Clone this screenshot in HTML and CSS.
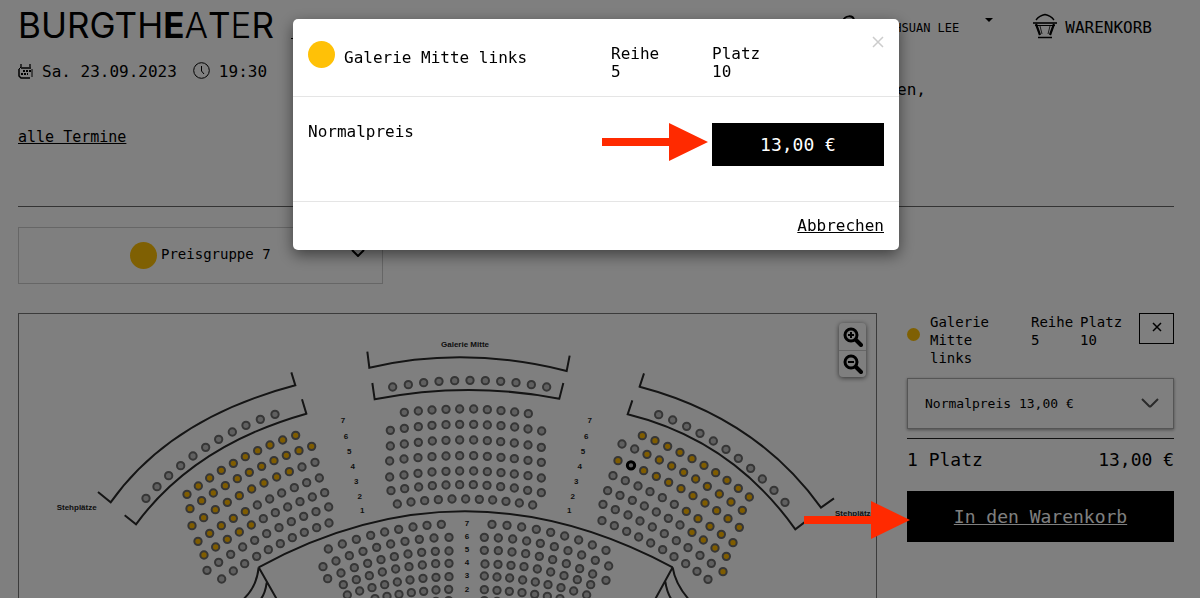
FILE: index.html
```html
<!DOCTYPE html>
<html lang="de">
  <head>
    <meta charset="UTF-8" />
    <meta name="viewport" content="width=device-width, initial-scale=1.0" />
    <title>Burgtheater - Platzwahl</title>
    <link rel="stylesheet" href="styles.css">
  </head>
  <body>
    <div class="page">
      <header class="site-header">
        <a href="#" class="logo">BURGTH<span class="logo-heavy">E</span><span class="logo-light">A</span>T<span class="logo-light">E</span>R</a>
        <div class="search-line"></div>
        <nav class="user-nav">
          <a href="#" class="user-link">
            <svg class="user-icon" viewBox="0 0 16 26" fill="none" stroke="#000" stroke-width="2">
              <path d="M2 6C4 0 12 0 13 5C15 11 8 16 4 12" />
              <path d="M1 25c0-12 14-12 14 0" />
            </svg>
            HSUAN LEE
            <span class="caret"></span>
          </a>
          <a href="#" class="cart-link">
            <svg class="cart-icon" viewBox="0 0 24 26" fill="none" stroke="#000">
              <path d="M3 7C6 3 9 2 12 1.500C15 2 18 3 21 7" stroke-width="1.300" />
              <path d="M0 10h24" stroke-width="1.600" />
              <path d="M2 12.500h20" stroke-width="1" />
              <path d="M3 11l4 11M21 11l-4 11" stroke-width="2.200" />
              <path d="M7 13l2 8M17 13l-2 8" stroke-width="0.800" />
              <path d="M5 24.500h14" stroke-width="1.500" />
            </svg>
            WARENKORB
          </a>
        </nav>
      </header>

      <section class="event">
        <div class="event-info">
          <p class="event-date">
            <svg class="calendar-icon" viewBox="0 0 15 15" fill="none" stroke="#000">
              <path d="M1 5v7l2 2h9M3 4h10" stroke-width="1.500" />
              <path d="M14 5v8M1 5l2-2" stroke-width="1" />
              <path d="M3 0v3M12 0v3" stroke-width="1.300" />
              <path d="M5 7h8M3 10h7" stroke-width="1.800" stroke-dasharray="2 1" />
            </svg>
            <span>Sa. 23.09.2023</span>
            <svg class="clock-icon" viewBox="0 0 17 17" fill="none" stroke="#000">
              <circle cx="8.500" cy="8.500" r="7.800" />
              <path d="M8.500 4v5l2.500 3" />
            </svg>
            <span>19:30</span>
          </p>
          <a href="#" class="all-dates">alle Termine</a>
        </div>
        <p class="event-note">en,</p>
      </section>

      <div class="price-filter">
        <span class="price-dot"></span>
        <select class="price-select" aria-label="Preisgruppe">
          <option>Preisgruppe 7</option>
        </select>
        <svg class="filter-chevron" viewBox="0 0 14 8" fill="none" stroke="#000" stroke-width="2">
          <path d="M1 1l6 6 6-6" />
        </svg>
      </div>

      <main class="booking">
        <div class="seat-map">
          <svg class="plan" viewBox="57 942 2571 855">
            <g id="blockLeft" transform="translate(0 1080)">
              <path class="wall" d="M294 396L332 427Q511 174 886 76L874 37" />
              <path class="wall" d="M374 466L408 493Q582 256 919 161L906 118" />
              <path class="wall" d="M776 622Q770 680 732 716M776 622L834 724M800 668Q796 700 782 718" />
              <text class="plan-label" x="230" y="451">Stehplätze</text>
            </g>
            <g id="blockCenter" transform="translate(960 990)">
              <path class="wall" d="M142 65L148 113Q436 46 740 123L749 77" />
              <path class="wall" d="M157 159L164 208Q441 153 718 206L730 159" />
              <path class="wall" d="M-184 712Q433 376 1058 712" />
              <text class="plan-label" x="435" y="52">Galerie Mitte</text>
            </g>
            <g id="blockRight" transform="translate(1680 1080)">
              <path class="wall" d="M252 40L239 80Q589 172 783 443L822 415" />
              <path class="wall" d="M217 121L203 163Q516 240 706 508L745 478" />
              <path class="wall" d="M338 622L282 724M338 622Q345 670 386 718M316 665Q320 695 334 718" />
              <text class="plan-label" x="885" y="467">Stehplätze</text>
            </g>
          </svg>
          <div class="zoom-controls">
            <button type="button" class="zoom-button" aria-label="Vergrößern">
              <svg viewBox="0 0 20 20" fill="none" stroke="#000">
                <circle cx="8" cy="8" r="6" stroke-width="3" />
                <path d="M13 13l5 5" stroke-width="4" stroke-linecap="round" />
                <path d="M5 8h6M8 5v6" stroke-width="2" />
              </svg>
            </button>
            <button type="button" class="zoom-button" aria-label="Verkleinern">
              <svg viewBox="0 0 20 20" fill="none" stroke="#000">
                <circle cx="8" cy="8" r="6" stroke-width="3" />
                <path d="M13 13l5 5" stroke-width="4" stroke-linecap="round" />
                <path d="M5 8h6" stroke-width="2" />
              </svg>
            </button>
          </div>
        </div>

        <aside class="cart">
          <div class="cart-item">
            <span class="seat-dot"></span>
            <div class="seat-name">Galerie Mitte links</div>
            <div>Reihe<br />5</div>
            <div>Platz<br />10</div>
            <button type="button" class="remove-button" aria-label="Entfernen">
              <svg viewBox="0 0 10 10" stroke="#000" stroke-width="1.500">
                <path d="M1 1l8 8M9 1l-8 8" />
              </svg>
            </button>
          </div>
          <div class="fare">
            <select class="fare-select" aria-label="Preis">
              <option>Normalpreis 13,00 €</option>
            </select>
            <svg class="fare-chevron" viewBox="0 0 18 10" fill="none" stroke="#555" stroke-width="2">
              <path d="M1 1l7 7q1 1 2 0l7-7" />
            </svg>
          </div>
          <div class="cart-total">
            <span>1 Platz</span>
            <span>13,00 €</span>
          </div>
          <div class="cart-action">
            <button type="button" class="cart-button">In den Warenkorb</button>
            <svg class="arrow arrow-cart" viewBox="0 0 106 38" fill="#ff2a00">
              <path d="M0 15h67V0l39 19-39 19V23H0z" />
            </svg>
          </div>
        </aside>
      </main>
    </div>

    <div class="backdrop">
      <div class="modal" role="dialog" aria-label="Preis wählen">
        <div class="modal-header">
          <div class="modal-seat">
            <span class="price-dot"></span>
            <span class="modal-seat-name">Galerie Mitte links</span>
          </div>
          <div>Reihe<br />5</div>
          <div>Platz<br />10</div>
          <button type="button" class="close-button" aria-label="Schließen">
            <svg viewBox="0 0 12 12" stroke="#ccc" stroke-width="1.500">
              <path d="M1 1l10 10M11 1l-10 10" />
            </svg>
          </button>
        </div>
        <div class="modal-body">
          <span class="fare-name">Normalpreis</span>
          <div class="fare-action">
            <button type="button" class="fare-button">13,00 €</button>
            <svg class="arrow arrow-fare" viewBox="0 0 106 38" fill="#ff2a00">
              <path d="M0 15h67V0l39 19-39 19V23H0z" />
            </svg>
          </div>
        </div>
        <div class="modal-footer">
          <a href="#">Abbrechen</a>
        </div>
      </div>
    </div>

    <script>
      // Each row: first, middle and last seat (x, y), then one letter per seat
      // y = available, g = taken, s = selected
      const rows = {
        blockLeft: [
          [438, 415, 617, 262, 825, 163, "ggggggggggg"],
          [561, 403, 718, 300, 887, 226, "yyyyyyyyyy"],
          [570, 446, 748, 337, 935, 259, "yyyyyyyyyyy"],
          [576, 497, 755, 387, 945, 307, "yyyyyyyyygg"],
          [594, 544, 772, 435, 958, 354, "yyyyygggggg"],
          [612, 585, 790, 476, 974, 398, "yyyyygggggg"],
          [621, 631, 800, 521, 986, 441, "ggggggggggg"],
          [665, 657, 823, 560, 987, 489, "gggggggggg"],
        ],
        blockCenter: [
          [218, 171, 450, 151, 680, 171, "ggggggggggg"],
          [253, 247, 440, 237, 625, 251, "gggggggggg"],
          [211, 301, 440, 283, 665, 303, "gggggggggggg"],
          [211, 348, 440, 330, 664, 352, "gggggggggggg"],
          [209, 393, 440, 377, 664, 397, "gggggggggggg"],
          [209, 441, 440, 423, 664, 444, "gggggggggggg"],
          [213, 482, 440, 464, 664, 488, "gggggggggggg"],
          [232, 522, 437, 507, 638, 525, "ggggggggggg"],
          [25, 657, 194, 606, 364, 583, "ggggggggg"],
          [9, 710, 191, 647, 387, 622, "gggggggggg"],
          [23, 746, 203, 684, 387, 663, "gggggggggg"],
          [70, 764, 227, 717, 387, 700, "ggggggggg"],
          [82, 795, 232, 756, 387, 740, "ggggggggg"],
          [165, 806, 274, 788, 386, 778, "ggggggg"],
          [310, 818, 348, 814, 386, 812, "ggg"],
          [516, 583, 692, 607, 858, 661, "ggggggggg"],
          [493, 622, 682, 645, 866, 708, "gggggggggg"],
          [493, 661, 678, 684, 858, 751, "gggggggggg"],
          [495, 702, 652, 717, 812, 764, "ggggggggg"],
          [493, 738, 646, 756, 800, 795, "ggggggggg"],
          [493, 779, 606, 788, 720, 806, "ggggggg"],
          [493, 812, 531, 814, 570, 818, "ggg"],
        ],
        blockRight: [
          [296, 164, 498, 268, 675, 427, "ggggggggggg"],
          [247, 227, 414, 306, 568, 411, "yyyyyyyyyy"],
          [186, 252, 371, 337, 547, 451, "ggyyyyyyyyy"],
          [174, 302, 363, 386, 538, 502, "ysyyyyyyyyy"],
          [159, 347, 343, 433, 519, 548, "ggggggyyyyy"],
          [143, 392, 325, 475, 499, 589, "gggggggyyyy"],
          [129, 433, 313, 521, 489, 635, "ggggggggggy"],
          [126, 482, 290, 559, 444, 658, "gggggggggg"],
        ],
      };

      // Row numbers in the center block: number, x, y
      const rowNumbers = [
        [7, 69, 271], [6, 78, 318], [5, 88, 364], [4, 98, 408], [3, 109, 453], [2, 119, 497], [1, 127, 541],
        [7, 809, 271], [6, 799, 318], [5, 789, 364], [4, 779, 408], [3, 769, 453], [2, 758, 497], [1, 748, 541],
        [7, 441, 580], [6, 441, 619], [5, 441, 658], [4, 441, 697], [3, 441, 736], [2, 441, 776],
      ];

      const seatClasses = { y: "seat available", g: "seat", s: "seat selected" };

      function addSvg(parent, name, attributes) {
        const node = document.createElementNS("http://www.w3.org/2000/svg", name);
        for (const key in attributes) {
          node.setAttribute(key, attributes[key]);
        }
        parent.appendChild(node);
        return node;
      }

      // Point on the parabola through a (t = 0), m (t = 0.5) and b (t = 1)
      function along(a, m, b, t) {
        return a * (1 - t) * (1 - 2 * t) + m * 4 * t * (1 - t) + b * t * (2 * t - 1);
      }

      for (const id in rows) {
        const block = document.getElementById(id);
        rows[id].forEach(function ([x0, y0, xm, ym, x1, y1, seats]) {
          seats.split("").forEach(function (seat, i) {
            const t = i / (seats.length - 1);
            addSvg(block, "circle", {
              class: seatClasses[seat],
              cx: Math.round(along(x0, xm, x1, t)),
              cy: Math.round(along(y0, ym, y1, t)),
              r: 11,
            });
          });
        });
      }

      rowNumbers.forEach(function ([number, x, y]) {
        const block = document.getElementById("blockCenter");
        addSvg(block, "text", { class: "plan-label", x: x, y: y + 9 }).textContent = number;
      });
    </script>
  </body>
</html>
```
FILE: styles.css
```css
* {
  box-sizing: border-box;
}

body {
  margin: 0;
  font-family: "DejaVu Sans Mono", monospace;
  font-size: 16px;
  line-height: 18px;
  color: #000;
  background-color: #fff;
}

p {
  margin: 0;
}

a {
  color: #000;
}

button,
select {
  font-family: inherit;
  color: #000;
  cursor: pointer;
}

svg {
  display: block;
}

.page {
  padding: 0 26px 0 18px;
}

/* Header */
.site-header {
  display: flex;
  height: 52px;
}

.logo {
  width: 273px;
  font-family: Inter, sans-serif;
  font-size: 35px;
  line-height: 50px;
  text-decoration: none;
}

.logo-heavy {
  font-weight: 700;
}

.logo-light {
  font-weight: 300;
}

.search-line {
  flex: 1;
  height: 39px;
  border-bottom: 1px solid #000;
}

.user-nav {
  display: flex;
  gap: 40px;
  padding: 13px 22px 0 60px;
}

.user-nav a {
  display: flex;
  text-decoration: none;
}

.user-link {
  gap: 37px;
  align-items: center;
  height: 30px;
  font-size: 12px;
}

.user-icon {
  width: 16px;
  height: 26px;
}

.caret {
  align-self: flex-start;
  margin: 5px 0 0 -11px;
  border: 4px solid transparent;
  border-top-color: #000;
  border-bottom: 0;
}

.cart-link {
  gap: 8px;
  align-items: center;
  height: 30px;
}

.cart-icon {
  width: 24px;
  height: 26px;
  margin-bottom: 4px;
}

/* Event */
.event {
  display: flex;
  justify-content: space-between;
  height: 155px;
  padding-top: 10px;
  border-bottom: 1px solid #666;
}

.event-date {
  display: flex;
  align-items: center;
  margin-bottom: 47px;
}

.calendar-icon {
  width: 15px;
  height: 15px;
  margin-right: 9px;
}

.clock-icon {
  width: 17px;
  height: 17px;
  margin: 0 9px 2px 16px;
}

.all-dates {
  font-size: 15px;
}

.event-note {
  padding: 19px 248px 0 0;
}

/* Price group filter */
.price-filter {
  position: relative;
  display: flex;
  justify-content: center;
  align-items: center;
  gap: 4px;
  width: 365px;
  height: 57px;
  margin: 20px 0 29px;
  border: 1px solid #ccc;
}

.price-dot {
  flex: none;
  width: 27px;
  height: 27px;
  border-radius: 50%;
  background-color: #ffc107;
}

.price-select {
  appearance: none;
  padding: 0 0 3px;
  border: 0;
  background: none;
  font-size: 14px;
}

.filter-chevron {
  position: absolute;
  right: 17px;
  top: 21px;
  width: 14px;
  height: 8px;
}

/* Seat map and cart */
.booking {
  display: flex;
  align-items: flex-start;
  gap: 30px;
}

.seat-map {
  position: relative;
  flex: 1;
  border: 1px solid #777;
  border-bottom: 0;
}

.plan {
  width: 100%;
}

.wall {
  fill: none;
  stroke: #2a2a2a;
  stroke-width: 6;
}

.plan-label {
  font-family: "Liberation Sans Narrow", "Liberation Sans", sans-serif;
  font-size: 24px;
  font-weight: bold;
  text-anchor: middle;
  fill: #222;
}

.seat {
  fill: #c0c0c0;
  stroke: #6c6c6c;
  stroke-width: 6;
}

.available {
  fill: #ffb800;
}

.selected {
  stroke: #000;
  stroke-width: 9;
}

.zoom-controls {
  position: absolute;
  top: 9px;
  right: 10px;
  width: 27px;
  border-radius: 4px;
  box-shadow: 0 1px 5px rgba(0, 0, 0, 0.6);
}

.zoom-button {
  display: flex;
  justify-content: center;
  align-items: center;
  width: 100%;
  height: 27px;
  padding: 0;
  border: 0;
  background: none;
}

.zoom-button + .zoom-button {
  border-top: 1px solid #ccc;
}

.zoom-button svg {
  width: 20px;
  height: 20px;
}

.cart {
  width: 267px;
}

.cart-item {
  display: grid;
  grid-template-columns: 23px 1fr 49px 59px 35px;
  align-items: start;
  margin-bottom: 11px;
  font-size: 14px;
}

.seat-dot {
  width: 13px;
  height: 13px;
  margin-top: 15px;
  border-radius: 50%;
  background-color: #ffc107;
}

.seat-name {
  padding-right: 20px;
}

.remove-button {
  display: flex;
  justify-content: center;
  align-items: center;
  height: 31px;
  padding: 0 0 3px;
  border: 1px solid #000;
  background: none;
}

.remove-button svg {
  width: 10px;
  height: 10px;
}

.fare {
  position: relative;
  padding-bottom: 9px;
  border-bottom: 1px solid #222;
}

.fare-select {
  appearance: none;
  display: block;
  width: 100%;
  height: 51px;
  padding: 0 17px;
  border: 1px solid #aaa;
  border-radius: 0;
  box-shadow: 0 1px 3px rgba(0, 0, 0, 0.4);
  background: none;
  font-size: 13px;
}

.fare-chevron {
  position: absolute;
  right: 15px;
  top: 20px;
  width: 18px;
  height: 10px;
}

.cart-total {
  display: flex;
  justify-content: space-between;
  padding: 12px 0 22px;
  font-size: 18px;
}

.cart-action,
.fare-action {
  position: relative;
}

.cart-button {
  width: 100%;
  height: 51px;
  border: 0;
  background-color: #000;
  color: #fff;
  font-size: 18px;
  text-decoration: underline;
}

/* Red pointer arrows */
.arrow {
  position: absolute;
  width: 106px;
  height: 38px;
}

.arrow-cart {
  right: 264px;
  top: 10px;
  z-index: 20;
}

.arrow-fare {
  right: 176px;
  top: 0;
}

/* Modal */
.backdrop {
  position: fixed;
  inset: 0;
  z-index: 10;
  padding: 19px 8px 0 0;
  background-color: rgba(0, 0, 0, 0.5);
}

.modal {
  max-width: 606px;
  margin: 0 auto;
  border-radius: 5px;
  background-color: #fff;
  box-shadow: 0 5px 15px rgba(0, 0, 0, 0.5);
}

.modal-header,
.modal-body {
  display: grid;
  grid-template-columns: 1fr 101px 172px;
  padding: 26px 15px 15px;
  border-bottom: 1px solid #e5e5e5;
}

.modal-header {
  position: relative;
}

.modal-seat {
  display: flex;
  align-items: flex-start;
  gap: 9px;
  margin-top: -4px;
}

.modal-seat-name {
  padding-top: 8px;
}

.close-button {
  position: absolute;
  top: 17px;
  right: 15px;
  padding: 0;
  border: 0;
  background: none;
}

.close-button svg {
  width: 12px;
  height: 12px;
}

.modal-body {
  grid-template-columns: 1fr 172px;
  padding-bottom: 35px;
}

.fare-button {
  width: 100%;
  height: 43px;
  border: 0;
  background-color: #000;
  color: #fff;
  font-size: 18px;
}

.modal-footer {
  padding: 15px;
  text-align: right;
}
```
